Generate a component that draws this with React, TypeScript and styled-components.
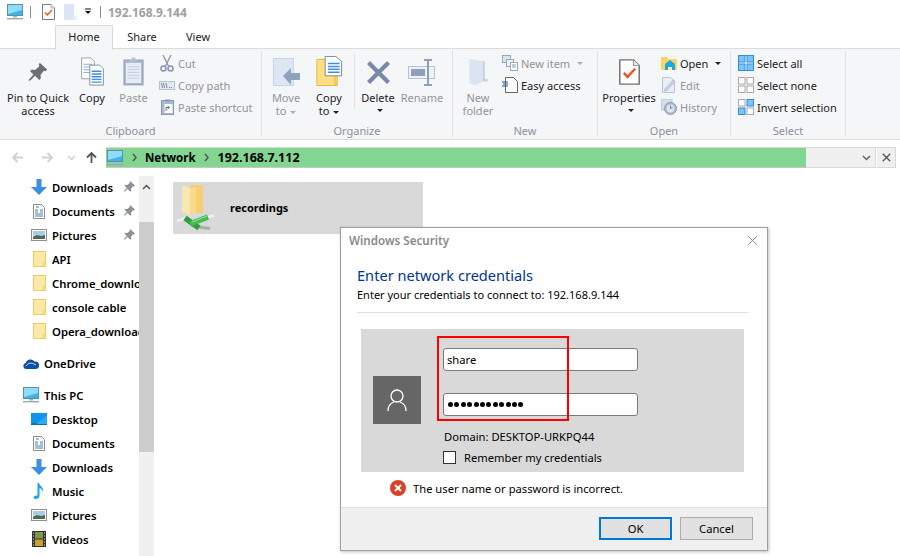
import React from "react";
import styled, { createGlobalStyle } from "styled-components";

const Global = createGlobalStyle`
  html, body { margin: 0; padding: 0; background: #fff; }
  body { font-family: "Noto Sans", "Open Sans", sans-serif; font-size: 11px; color: #1a1a1a; }
`;

const Page = styled.div`
  position: relative;
  width: 900px;
  height: 556px;
  overflow: hidden;
  background: #fff;
  display: flex;
  flex-direction: column;
`;

/* ---------- title bar ---------- */
const TitleBar = styled.div`
  height: 24px;
  display: flex;
  align-items: center;
  padding-left: 7px;
`;
const TitleSep = styled.span<{ $l: number; $r: number }>`
  width: 1px;
  height: 12px;
  background: #8a8a8a;
  margin-left: ${(p) => p.$l}px;
  margin-right: ${(p) => p.$r}px;
`;
const TitleText = styled.span`
  font-weight: 700;
  font-size: 12px;
  color: #a0a0a0;
`;
const QuickIcon = styled.span<{ $r: number }>`
  display: flex;
  margin-right: ${(p) => p.$r}px;
`;

/* ---------- tabs ---------- */
const Tabs = styled.div`
  height: 24px;
  display: flex;
  padding-left: 55px;
  box-sizing: border-box;
`;
const Tab = styled.div<{ $active?: boolean; $w: number }>`
  width: ${(p) => p.$w}px;
  height: ${(p) => (p.$active ? 25 : 24)}px;
  box-sizing: border-box;
  display: flex;
  align-items: center;
  justify-content: center;
  margin-top: 1px;
  padding-bottom: 3px;
  position: relative;
  z-index: 1;
  color: #222;
  background: ${(p) => (p.$active ? "#f5f6f7" : "transparent")};
  border: 1px solid ${(p) => (p.$active ? "#dadbdc" : "transparent")};
  border-bottom: none;
`;

/* ---------- ribbon ---------- */
const Ribbon = styled.div`
  height: 92px;
  box-sizing: border-box;
  background: #f5f6f7;
  border-top: 1px solid #dadbdc;
  border-bottom: 1px solid #dadbdc;
  display: flex;
  padding-top: 2px;
`;
const Group = styled.div<{ $w: number }>`
  width: ${(p) => p.$w}px;
  height: 86px;
  box-sizing: content-box;
  border-right: 1px solid #dfe1e3;
  display: flex;
  flex-direction: column;
`;
const GroupBody = styled.div<{ $pl?: number }>`
  flex: 1;
  display: flex;
  padding-left: ${(p) => p.$pl ?? 0}px;
`;
const GroupLabel = styled.div`
  height: 16px;
  line-height: 16px;
  margin-bottom: -2px;
  text-align: center;
  color: #8b9197;
`;
const Large = styled.div<{ $w: number; $off?: boolean }>`
  width: ${(p) => p.$w}px;
  display: flex;
  flex-direction: column;
  align-items: center;
  color: ${(p) => (p.$off ? "#8f959a" : "#222")};
  line-height: 13px;
  text-align: center;
  white-space: nowrap;
`;
const LargeLabel = styled.span`
  display: block;
`;
const LargeIcon = styled.div`
  height: 32px;
  margin-top: 3px;
  margin-bottom: 5px;
  display: flex;
  align-items: flex-end;
  justify-content: center;
`;
const Caret = styled.span<{ $off?: boolean }>`
  display: inline-block;
  width: 0;
  height: 0;
  margin-left: 4px;
  vertical-align: middle;
  border-left: 3px solid transparent;
  border-right: 3px solid transparent;
  border-top: 3px solid ${(p) => (p.$off ? "#a9adb1" : "#222")};
`;
const CaretLine = styled.div`
  height: 13px;
  display: flex;
  align-items: center;
  justify-content: center;
`;
const InnerSep = styled.div<{ $ml: number; $mr: number }>`
  width: 1px;
  height: 55px;
  margin: 3px ${(p) => p.$mr}px 0 ${(p) => p.$ml}px;
  background: #dfe1e3;
`;
const SmallCol = styled.div<{ $ml?: number }>`
  display: flex;
  flex-direction: column;
  margin-left: ${(p) => p.$ml ?? 0}px;
  padding-top: 1px;
`;
const Small = styled.div<{ $off?: boolean }>`
  height: 22px;
  display: flex;
  align-items: center;
  gap: 3px;
  white-space: nowrap;
  color: ${(p) => (p.$off ? "#8f959a" : "#222")};
`;
const SmallIcon = styled.span`
  width: 16px;
  height: 16px;
  display: flex;
  align-items: center;
  justify-content: center;
`;

/* ---------- address ---------- */
const AddressRow = styled.div`
  height: 21px;
  margin-top: 7px;
  display: flex;
  align-items: center;
`;
const NavButtons = styled.div`
  width: 106px;
  display: flex;
  align-items: center;
  padding-left: 11px;
  box-sizing: border-box;
`;
const NavBtn = styled.span<{ $w: number }>`
  width: ${(p) => p.$w}px;
  display: flex;
`;
const Crumbs = styled.div`
  width: 700px;
  height: 21px;
  box-sizing: border-box;
  background: #83d691;
  border-bottom: 1px solid #c4cbc5;
  border-top: 1px solid #d9d9d9;
  display: flex;
  align-items: center;
  font-weight: 700;
  color: #000;
  padding-left: 1px;
`;
const Crumb = styled.span<{ $ml: number; $size: number }>`
  margin-left: ${(p) => p.$ml}px;
  font-size: ${(p) => p.$size}px;
`;
const Chevron = styled.span<{ $ml: number }>`
  display: flex;
  margin-left: ${(p) => p.$ml}px;
`;
const AddressEnd = styled.div`
  width: 70px;
  height: 21px;
  box-sizing: border-box;
  background: #f0f0f0;
  border: 1px solid #d9d9d9;
  border-left: none;
  display: flex;
  align-items: center;
  justify-content: flex-end;
  padding-right: 4px;
`;
const CloseBtn = styled.div`
  width: 20px;
  height: 21px;
  box-sizing: border-box;
  background: #f0f0f0;
  border: 1px solid #d9d9d9;
  border-left: 1px solid #fff;
  display: flex;
  align-items: center;
  justify-content: center;
`;

/* ---------- body ---------- */
const Body = styled.div`
  flex: 1;
  margin-top: 8px;
  display: flex;
  min-height: 0;
`;
const NavPane = styled.div`
  width: 139px;
  margin-top: -1px;
  overflow: hidden;
  flex-shrink: 0;
  display: flex;
  flex-direction: column;
`;
const NavItem = styled.div<{ $root?: boolean; $gap?: number }>`
  height: 24px;
  flex-shrink: 0;
  display: flex;
  align-items: center;
  padding-left: ${(p) => (p.$root ? 23 : 31)}px;
  margin-top: ${(p) => p.$gap ?? 0}px;
  font-size: 11.3px;
  font-weight: 600;
  color: #000;
  white-space: nowrap;
  position: relative;
`;
const NavIcon = styled.span`
  width: 16px;
  height: 16px;
  display: flex;
  align-items: center;
  justify-content: center;
  margin-right: 5px;
  flex-shrink: 0;
`;
const Pin = styled.span`
  position: absolute;
  left: 124px;
  top: 6px;
  display: flex;
`;
const Scrollbar = styled.div`
  width: 15px;
  background: #f0f0f0;
  flex-shrink: 0;
  display: flex;
  flex-direction: column;
`;
const ScrollUp = styled.div`
  height: 46px;
  display: flex;
  justify-content: center;
  padding-top: 7px;
  box-sizing: border-box;
`;
const ScrollThumb = styled.div`
  height: 230px;
  background: #cdcdcd;
`;
const Content = styled.div`
  flex: 1;
  padding: 6px 0 0 19px;
`;
const FolderTile = styled.div`
  width: 250px;
  height: 52px;
  box-sizing: border-box;
  background: #d9d9d9;
  display: flex;
  align-items: center;
  font-weight: 700;
  color: #000;
`;
const TileName = styled.span`
  margin-bottom: 2px;
`;
const TileIcon = styled.span`
  width: 57px;
  display: flex;
`;

/* ---------- dialog ---------- */
const Dialog = styled.div`
  position: absolute;
  left: 340px;
  top: 227px;
  width: 428px;
  height: 324px;
  box-sizing: border-box;
  background: #fff;
  border: 1px solid #9f9f9f;
  box-shadow: 1px 1px 3px rgba(0, 0, 0, 0.25);
  display: flex;
  flex-direction: column;
  color: #000;
  font-size: 11.2px;
`;
const DialogTitle = styled.div`
  height: 26px;
  flex-shrink: 0;
  box-sizing: border-box;
  padding: 0 9px 2px 8px;
  display: flex;
  align-items: center;
  justify-content: space-between;
  color: #8a8a8a;
  font-size: 11.6px;
  font-weight: 600;
`;
const DialogMain = styled.div`
  flex: 1;
  padding: 10px 19px 0 16px;
  display: flex;
  flex-direction: column;
`;
const Heading = styled.div`
  font-size: 14.6px;
  line-height: 22px;
  color: #003399;
`;
const SubText = styled.div`
  line-height: 17px;
  padding-bottom: 9px;
  border-bottom: 1px solid #dfdfdf;
  font-size: 11px;
`;
const CredPanel = styled.div`
  margin: 16px 4px 0 4px;
  height: 143px;
  background: #d9d9d9;
  display: flex;
  padding: 19px 0 0 12px;
  box-sizing: border-box;
`;
const Avatar = styled.div`
  width: 48px;
  height: 48px;
  margin-top: 28px;
  background: #666;
  display: flex;
  align-items: center;
  justify-content: center;
`;
const Fields = styled.div`
  margin-left: 22px;
  display: flex;
  flex-direction: column;
`;
const Field = styled.div<{ $mt?: number }>`
  width: 195px;
  height: 23px;
  box-sizing: border-box;
  background: #fff;
  border: 1px solid #7a7a7a;
  border-radius: 3px;
  padding-left: 3px;
  display: flex;
  align-items: center;
  margin-top: ${(p) => p.$mt ?? 0}px;
`;
const Dots = styled.span`
  display: flex;
  gap: 1.4px;
  margin-left: 1px;
`;
const Dot = styled.i`
  width: 5px;
  height: 5px;
  border-radius: 50%;
  background: #000;
`;
const Domain = styled.div`
  margin: 13px 0 0 1px;
  line-height: 16px;
`;
const RememberRow = styled.div`
  margin-top: 5px;
  display: flex;
  align-items: center;
  gap: 8px;
`;
const Check = styled.span`
  width: 13px;
  height: 13px;
  box-sizing: border-box;
  background: #fff;
  border: 1px solid #333;
`;
const ErrorRow = styled.div`
  margin: 8px 0 0 33px;
  display: flex;
  align-items: center;
  gap: 7px;
`;
const Footer = styled.div`
  height: 43px;
  flex-shrink: 0;
  box-sizing: border-box;
  background: #f0f0f0;
  border-top: 1px solid #dfdfdf;
  display: flex;
  justify-content: flex-end;
  align-items: flex-start;
  gap: 8px;
  padding: 9px 14px 0 0;
`;
const Btn = styled.div<{ $primary?: boolean }>`
  width: 73px;
  height: 23px;
  box-sizing: border-box;
  background: #e1e1e1;
  border: ${(p) => (p.$primary ? "2px solid #0078d7" : "1px solid #adadad")};
  display: flex;
  align-items: center;
  justify-content: center;
`;
const RedBox = styled.div`
  position: absolute;
  left: 437px;
  top: 336px;
  width: 132px;
  height: 85px;
  box-sizing: border-box;
  border: 2px solid #f00;
  pointer-events: none;
`;

/* ---------- icons ---------- */
const PcIcon = ({ s = 16 }: { s?: number }) => (
  <svg width={s} height={s} viewBox="0 0 16 16">
    <rect x="0.5" y="0.5" width="15" height="11" fill="#3fb3ee" stroke="#5b8fa8" />
    <path d="M1 1h14v5L1 10z" fill="#8fdcf8" />
    <rect x="6" y="12" width="4" height="1.5" fill="#a9b4ba" />
    <rect x="0" y="14" width="16" height="1.4" fill="#9aa7ae" />
  </svg>
);
const PropsIcon = ({ w = 13, h = 16 }: { w?: number; h?: number }) => (
  <svg width={w} height={h} viewBox="0 0 13 16">
    <path d="M.5.5h8.5l3.5 3.5v11.5h-12z" fill="#fff" stroke="#6f6f6f" strokeWidth="0.9" />
    <path d="M9 .5v3.5h3.5" fill="#eee" stroke="#9a9a9a" strokeWidth="0.7" />
    <path d="M3 8.5l2.3 2.5 4.7-5" fill="none" stroke="#f0561e" strokeWidth="1.5" />
  </svg>
);
const PageIcon = () => (
  <svg width="13" height="16" viewBox="0 0 13 16">
    <path d="M0 0h10v12h3v4h-13z" fill="#dbe5f3" />
    <path d="M10 12h3v4h-3z" fill="#eef2f8" />
  </svg>
);
const DropMark = () => (
  <svg width="8" height="8" viewBox="0 0 8 8">
    <rect x="1" y="0.5" width="6" height="1" fill="#111" />
    <path d="M1 3h6l-3 3z" fill="#111" />
  </svg>
);
const PinBig = () => (
  <svg width="20" height="24" viewBox="0 0 24 28.8">
    <path d="M14 1l9 8-2 2-2-.5-4 5 .5 4-2 2-5-5-6 6-2-.5 6-7-4-4 2-2 4 .5 5-4.5-.5-2z" fill="#6a7076" />
  </svg>
);
const CopyBig = () => (
  <svg width="25" height="29" viewBox="0 0 26 32">
    <path d="M1 1h10l4 4v19H1z" fill="#fff" stroke="#8f9aa5" />
    <path d="M3 8h10M3 11h10M3 14h10M3 17h10" stroke="#7aa7dd" />
    <path d="M10 9h11l4 4v18H10z" fill="#fff" stroke="#7b8894" />
    <path d="M12 15h11v1.5H12zM12 18h11v1.5H12zM12 21h11v1.5H12zM12 24h11v1.5H12zM12 27h11v1.5H12z" fill="#3f8fe8" />
  </svg>
);
const PasteBig = () => (
  <svg width="21" height="29" viewBox="0 0 22 30">
    <rect x="1" y="3" width="20" height="26" fill="#aab8cd" stroke="#8c9ab0" />
    <rect x="3" y="6" width="16" height="21" fill="#e7ecf4" />
    <path d="M5 10h12M5 13h12M5 16h12M5 19h12M5 22h12" stroke="#c3cedd" />
    <path d="M7 3h8v3H7zM9 .5h4V3H9z" fill="#b0bccf" />
  </svg>
);
const CutIcon = () => (
  <svg width="14" height="17" viewBox="0 0 14 17">
    <path d="M3 0l5.5 11M11 0L5.5 11" stroke="#8f9db1" strokeWidth="1.4" />
    <circle cx="3.5" cy="13.5" r="2.5" fill="none" stroke="#7f96b8" strokeWidth="1.5" />
    <circle cx="10.5" cy="13.5" r="2.5" fill="none" stroke="#7f96b8" strokeWidth="1.5" />
  </svg>
);
const CopyPathIcon = () => (
  <svg width="16" height="9" viewBox="0 0 16 9">
    <rect x="0.5" y="0.5" width="15" height="8" fill="#e4e9f1" stroke="#b7c2d2" />
    <path d="M2.5 2l1 5M4.5 2l1 5M7 2l1 5" stroke="#7c8ca3" />
    <path d="M10 6.5h1M12 6.5h1" stroke="#7c8ca3" />
  </svg>
);
const PasteShortcutIcon = () => (
  <svg width="13" height="16" viewBox="0 0 13 16">
    <rect x="0.5" y="1.5" width="12" height="14" fill="#a9b8ce" stroke="#8b9ab0" />
    <rect x="3.5" y="5" width="8" height="9" fill="#fff" />
    <path d="M4 .5h5v2H4z" fill="#8b9ab0" />
    <path d="M5 12V8.5h3M6.5 7l2 1.5-2 1.5" stroke="#5f7187" fill="none" />
  </svg>
);
const MoveBig = () => (
  <svg width="27" height="28" viewBox="0 0 27 28">
    <path d="M.5.5h20v27H.5z" fill="#dde6f3" stroke="#cbd6e6" />
    <path d="M10 18l8-8v5h9v7h-9v5z" fill="#8fa3bf" />
  </svg>
);
const CopyToBig = () => (
  <svg width="27" height="30" viewBox="0 0 27 31">
    <path d="M.5 3.5h21v27H.5z" fill="#ffdf86" stroke="#e4b83c" />
    <path d="M18 20h3v10h-3z" fill="#f2cb5c" />
    <path d="M9 .5h11l6 5v15H9z" fill="#fff" stroke="#7b8894" />
    <path d="M12 7h12v1.5H12zM12 10h12v1.5H12zM12 13h12v1.5H12zM12 16h12v1.5H12z" fill="#3f8fe8" />
  </svg>
);
const DeleteBig = () => (
  <svg width="27" height="27" viewBox="0 0 27 27">
    <path d="M2 5l3-3 8.5 8.5L22 2l3 3-8.5 8.5L25 22l-3 3-8.5-8.5L5 25l-3-3 8.5-8.5z" fill="#7889a8" />
  </svg>
);
const RenameBig = () => (
  <svg width="28" height="27" viewBox="0 0 28 27">
    <rect x="0.5" y="7.5" width="26" height="12" fill="#eef2f8" stroke="#b5c2d5" />
    <rect x="3" y="10" width="14" height="7" fill="#8d9fbb" />
    <path d="M16 1h8M16 26h8M20 1v25" stroke="#8d9fbb" strokeWidth="2" />
  </svg>
);
const NewFolderBig = () => (
  <svg width="19" height="27" viewBox="0 0 19 28">
    <path d="M0 0l14 2v19h5v2H14l-8 4.5L0 25z" fill="#dbe4f1" />
    <path d="M14 2h2v19h3v2h-5z" fill="#c4d1e3" />
  </svg>
);
const NewItemIcon = () => (
  <svg width="16" height="16" viewBox="0 0 16 16">
    <rect x="0.5" y="0.5" width="8" height="7" fill="#dde4ee" stroke="#9ba9bb" />
    <rect x="4.5" y="4.5" width="7" height="7" fill="#eef2f7" stroke="#9ba9bb" />
    <rect x="8.5" y="7.5" width="7" height="8" fill="#fff" stroke="#9ba9bb" />
    <path d="M10 10h4M10 12h4" stroke="#7f9cc2" />
  </svg>
);
const EasyAccessIcon = () => (
  <svg width="16" height="16" viewBox="0 0 16 16">
    <path d="M3.5.5h8l4 4v11h-12z" fill="#fff" stroke="#666" />
    <path d="M0 5h6M1 7h5M0 9h6" stroke="#1d5fa8" />
  </svg>
);
const OpenIcon = () => (
  <svg width="16" height="14" viewBox="0 0 16 14">
    <path d="M0 1h6l1 2h9v11H0z" fill="#ffd35c" />
    <path d="M4 8l5-4 5 4v6H4z" fill="#18a9e8" />
    <path d="M7 11h4v3H7z" fill="#ffe9a8" />
  </svg>
);
const EditIcon = () => (
  <svg width="14" height="16" viewBox="0 0 14 16">
    <path d="M.5.5h8l4 3.5v11.5H.5z" fill="#e9eef6" stroke="#b9c5d6" />
    <path d="M3 12l8-9 2 1.5-8 9-2.5.5z" fill="#c5d2e4" stroke="#9fb0c7" strokeWidth="0.6" />
  </svg>
);
const HistoryIcon = () => (
  <svg width="16" height="16" viewBox="0 0 16 16">
    <rect x="0" y="0" width="11" height="11" fill="#d5deeb" stroke="#bac6d8" />
    <circle cx="9.5" cy="9.5" r="6" fill="#aab7c9" stroke="#8e9db2" />
    <circle cx="9.5" cy="9.5" r="4" fill="#dde4ee" />
    <path d="M9.5 6.5v3l2-1" stroke="#6f8099" fill="none" />
  </svg>
);
const Grid = ({ cells, border }: { cells: boolean[]; border?: boolean }) => (
  <svg width="16" height="16" viewBox="0 0 16 16">
    {[0, 1, 2, 3].map((i) => {
      const x = i % 2 === 0 ? 0 : 8.5;
      const y = i < 2 ? 0 : 8.5;
      const on = cells[i];
      return (
        <rect
          key={i}
          x={x + 0.5}
          y={y + 0.5}
          width="6.5"
          height="6.5"
          fill={on ? "#7cc4f4" : "#fff"}
          stroke={on ? "#2e8fdc" : "#a9a9a9"}
        />
      );
    })}
    {border && <rect x="0.5" y="0.5" width="15" height="15" fill="none" stroke="#2e8fdc" />}
  </svg>
);
const Arrow = ({ dir, c }: { dir: "l" | "r" | "u"; c: string }) => {
  const rot = dir === "l" ? 180 : dir === "u" ? -90 : 0;
  return (
    <svg width="13" height="13" viewBox="0 0 13 13" style={{ transform: `rotate(${rot}deg)` }}>
      <path d="M1 6.5h10M6.5 2l4.5 4.5L6.5 11" fill="none" stroke={c} strokeWidth="1.8" />
    </svg>
  );
};
const SmallChevron = ({ c, d = "d" }: { c: string; d?: "d" | "r" | "u" }) => (
  <svg width="9" height="9" viewBox="0 0 9 9">
    {d === "d" && <path d="M1 3l3.5 3.5L8 3" fill="none" stroke={c} strokeWidth="1.5" />}
    {d === "r" && <path d="M3 1l3 3.5L3 8" fill="none" stroke={c} strokeWidth="1.5" />}
    {d === "u" && <path d="M1 6l3.5-3.5L8 6" fill="none" stroke={c} strokeWidth="1.5" />}
  </svg>
);
const XMark = ({ c, s, w }: { c: string; s: number; w: number }) => (
  <svg width={s} height={s} viewBox="0 0 12 12">
    <path d="M1 1l10 10M11 1L1 11" stroke={c} strokeWidth={w} />
  </svg>
);
const DownloadIcon = () => (
  <svg width="16" height="16" viewBox="0 0 16 16">
    <path d="M5.5 0h5v8H16l-8 8-8-8h5.5z" fill="#3c8ee0" />
  </svg>
);
const DocIcon = () => (
  <svg width="12" height="15" viewBox="0 0 12 15">
    <path d="M.5.5h8l3 3v11h-11z" fill="#fff" stroke="#8c8c8c" />
    <path d="M3 3h3M2 6h3M7 6h3M2 8h3M7 8h3M2 10h8M2 12h8" stroke="#4a7fa8" />
  </svg>
);
const PicIcon = () => (
  <svg width="16" height="12" viewBox="0 0 16 12">
    <rect x="0.5" y="0.5" width="15" height="11" fill="#fff" stroke="#8f8f8f" />
    <rect x="2" y="2" width="12" height="8" fill="#a8cde8" />
    <path d="M2 8l4-2 4 1 4-1v4H2z" fill="#4e6b50" />
  </svg>
);
const FolderSmall = () => (
  <svg width="13" height="16" viewBox="0 0 13 16">
    <rect x="0.5" y="0.5" width="12" height="15" fill="#ffe9a8" stroke="#eccb5a" />
    <path d="M10 11h2.5v4.5H10z" fill="#ffe08a" stroke="#eccb5a" strokeWidth="0.6" />
  </svg>
);
const PinSmall = () => (
  <svg width="11" height="11" viewBox="0 0 11 11">
    <path d="M6 0l5 4.5-1 1-1-.3-2 2.5.3 2-1 1L3.5 8 .8 10.8 0 10l2.8-3L.5 4.8l1-1 2 .3L6 1.5z" fill="#8a9097" />
  </svg>
);
const CloudIcon = () => (
  <svg width="16" height="11" viewBox="0 0 16 11">
    <path d="M3 11a3 3 0 0 1-.4-5.9A5 5 0 0 1 11.5 3.5 3.8 3.8 0 0 1 13 11z" fill="#0e4fa8" />
    <path d="M3 8c2-3 5-4 10-1" stroke="#fff" strokeWidth="0.8" fill="none" />
  </svg>
);
const DesktopIcon = () => (
  <svg width="16" height="12" viewBox="0 0 16 12">
    <rect x="0" y="0" width="16" height="12" fill="#0f95ec" />
    <path d="M0 11h16" stroke="#0a4f88" />
    <path d="M16 2L5 11h11z" fill="#2ea9f3" />
  </svg>
);
const MusicIcon = () => (
  <svg width="12" height="16" viewBox="0 0 12 16">
    <path d="M4.5 0h1.5c.5 3 5 4 4 9-.5-2-2-3.5-3.5-4v8c0 2-2 3-4 3S0 14.5 1 13.5s2.3-1.3 3.5-1z" fill="#16a3f0" />
  </svg>
);
const VideoIcon = () => (
  <svg width="14" height="16" viewBox="0 0 14 16">
    <rect width="14" height="16" fill="#333" />
    <rect x="3" y="1" width="8" height="6.5" fill="#7a9a4a" />
    <rect x="3" y="8.5" width="8" height="6.5" fill="#c9a227" />
    <path d="M1 2h1M1 5h1M1 8h1M1 11h1M1 14h1M12 2h1M12 5h1M12 8h1M12 11h1M12 14h1" stroke="#ddd" />
  </svg>
);
const ShareFolder = () => (
  <svg width="45" height="52" viewBox="0 0 45 52">
    <path d="M17 3h13v28H17z" fill="#f7cf72" />
    <path d="M9 3l8 3h6v6h-6v22l-8-5z" fill="#f9e7b0" />
    <path d="M17 6h6v25h-6z" fill="#fad98a" />
    <path d="M4 39l9-3" stroke="#eef0ef" strokeWidth="2.5" />
    <path d="M35 35l6-1.5" stroke="#eef0ef" strokeWidth="2.5" />
    <path d="M25 45l12 1.5" stroke="#aab0ae" strokeWidth="3" />
    <path d="M12 36l14 10" stroke="#2f9e3c" strokeWidth="5.5" />
    <path d="M17 42l18-7" stroke="#43bb4e" strokeWidth="5.5" />
    <path d="M19 40l15-6" stroke="#8be08f" strokeWidth="1.2" />
  </svg>
);
const UserIcon = () => (
  <svg width="20" height="24" viewBox="0 0 20 24">
    <circle cx="10" cy="8" r="6" fill="none" stroke="#fff" strokeWidth="1.3" />
    <path d="M1 23c0-5 3-8 6-9M19 23c0-5-3-8-6-9" fill="none" stroke="#fff" strokeWidth="1.3" />
  </svg>
);
const ErrorIcon = () => (
  <svg width="16" height="16" viewBox="0 0 16 16">
    <circle cx="8" cy="8" r="8" fill="#d9412b" />
    <path d="M5 5l6 6M11 5l-6 6" stroke="#fff" strokeWidth="2" />
  </svg>
);

const quick = [
  { icon: <DownloadIcon />, label: "Downloads", pin: true },
  { icon: <DocIcon />, label: "Documents", pin: true },
  { icon: <PicIcon />, label: "Pictures", pin: true },
  { icon: <FolderSmall />, label: "API" },
  { icon: <FolderSmall />, label: "Chrome_downloads" },
  { icon: <FolderSmall />, label: "console cable" },
  { icon: <FolderSmall />, label: "Opera_downloads" },
];
const pcItems = [
  { icon: <DesktopIcon />, label: "Desktop" },
  { icon: <DocIcon />, label: "Documents" },
  { icon: <DownloadIcon />, label: "Downloads" },
  { icon: <MusicIcon />, label: "Music" },
  { icon: <PicIcon />, label: "Pictures" },
  { icon: <VideoIcon />, label: "Videos" },
];

export default function App() {
  return (
    <Page>
      <Global />
      <TitleBar>
        <QuickIcon $r={0}><PcIcon /></QuickIcon>
        <TitleSep $l={7} $r={11} />
        <QuickIcon $r={9}><PropsIcon /></QuickIcon>
        <QuickIcon $r={7}><PageIcon /></QuickIcon>
        <QuickIcon $r={8}><DropMark /></QuickIcon>
        <TitleSep $l={0} $r={7} />
        <TitleText>192.168.9.144</TitleText>
      </TitleBar>
      <Tabs>
        <Tab $active $w={58}>Home</Tab>
        <Tab $w={58}>Share</Tab>
        <Tab $w={54}>View</Tab>
      </Tabs>
      <Ribbon>
        <Group $w={261}>
          <GroupBody>
            <Large $w={76}><LargeIcon><PinBig /></LargeIcon><LargeLabel>Pin to Quick<br />access</LargeLabel></Large>
            <Large $w={32}><LargeIcon><CopyBig /></LargeIcon><LargeLabel>Copy</LargeLabel></Large>
            <Large $off $w={51}><LargeIcon><PasteBig /></LargeIcon><LargeLabel>Paste</LargeLabel></Large>
            <SmallCol>
              <Small $off><SmallIcon><CutIcon /></SmallIcon>Cut</Small>
              <Small $off><SmallIcon><CopyPathIcon /></SmallIcon>Copy path</Small>
              <Small $off><SmallIcon><PasteShortcutIcon /></SmallIcon>Paste shortcut</Small>
            </SmallCol>
          </GroupBody>
          <GroupLabel>Clipboard</GroupLabel>
        </Group>
        <Group $w={190}>
          <GroupBody $pl={2}>
            <Large $off $w={44}><LargeIcon><MoveBig /></LargeIcon><LargeLabel>Move<br />to<Caret $off /></LargeLabel></Large>
            <Large $w={42}><LargeIcon><CopyToBig /></LargeIcon><LargeLabel>Copy<br />to<Caret /></LargeLabel></Large>
            <InnerSep $ml={4} $mr={3} />
            <Large $w={40}><LargeIcon><DeleteBig /></LargeIcon><LargeLabel>Delete</LargeLabel><CaretLine><Caret /></CaretLine></Large>
            <Large $off $w={48}><LargeIcon><RenameBig /></LargeIcon><LargeLabel>Rename</LargeLabel></Large>
          </GroupBody>
          <GroupLabel>Organize</GroupLabel>
        </Group>
        <Group $w={144}>
          <GroupBody $pl={3}>
            <Large $off $w={44}><LargeIcon><NewFolderBig /></LargeIcon><LargeLabel>New<br />folder</LargeLabel></Large>
            <SmallCol $ml={2}>
              <Small $off><SmallIcon><NewItemIcon /></SmallIcon>New item<Caret $off /></Small>
              <Small><SmallIcon><EasyAccessIcon /></SmallIcon>Easy access</Small>
            </SmallCol>
          </GroupBody>
          <GroupLabel>New</GroupLabel>
        </Group>
        <Group $w={132}>
          <GroupBody $pl={2}>
            <Large $w={58}><LargeIcon><PropsIcon w={21} h={28} /></LargeIcon><LargeLabel>Properties</LargeLabel><CaretLine><Caret /></CaretLine></Large>
            <SmallCol $ml={3}>
              <Small><SmallIcon><OpenIcon /></SmallIcon>Open<Caret /></Small>
              <Small $off><SmallIcon><EditIcon /></SmallIcon>Edit</Small>
              <Small $off><SmallIcon><HistoryIcon /></SmallIcon>History</Small>
            </SmallCol>
          </GroupBody>
          <GroupLabel>Open</GroupLabel>
        </Group>
        <Group $w={114}>
          <GroupBody $pl={7}>
            <SmallCol>
              <Small><SmallIcon><Grid cells={[true, true, true, true]} border /></SmallIcon>Select all</Small>
              <Small><SmallIcon><Grid cells={[false, false, false, false]} /></SmallIcon>Select none</Small>
              <Small><SmallIcon><Grid cells={[false, true, true, false]} /></SmallIcon>Invert selection</Small>
            </SmallCol>
          </GroupBody>
          <GroupLabel>Select</GroupLabel>
        </Group>
      </Ribbon>
      <AddressRow>
        <NavButtons>
          <NavBtn $w={30}><Arrow dir="l" c="#d0d0d0" /></NavBtn>
          <NavBtn $w={26}><Arrow dir="r" c="#d0d0d0" /></NavBtn>
          <NavBtn $w={18}><SmallChevron c="#d0d0d0" /></NavBtn>
          <NavBtn $w={15}><Arrow dir="u" c="#555" /></NavBtn>
        </NavButtons>
        <Crumbs>
          <PcIcon />
          <Chevron $ml={7}><SmallChevron c="#555" d="r" /></Chevron>
          <Crumb $ml={6} $size={11.5}>Network</Crumb>
          <Chevron $ml={6}><SmallChevron c="#555" d="r" /></Chevron>
          <Crumb $ml={7} $size={12.5}>192.168.7.112</Crumb>
        </Crumbs>
        <AddressEnd><SmallChevron c="#606060" /></AddressEnd>
        <CloseBtn><XMark c="#555" s={9} w={1.8} /></CloseBtn>
      </AddressRow>
      <Body>
        <NavPane>
          {quick.map((q) => (
            <NavItem key={q.label}>
              <NavIcon>{q.icon}</NavIcon>
              {q.label}
              {q.pin && <Pin><PinSmall /></Pin>}
            </NavItem>
          ))}
          <NavItem $root $gap={8}><NavIcon><CloudIcon /></NavIcon>OneDrive</NavItem>
          <NavItem $root $gap={8}><NavIcon><PcIcon /></NavIcon>This PC</NavItem>
          {pcItems.map((q) => (
            <NavItem key={q.label}><NavIcon>{q.icon}</NavIcon>{q.label}</NavItem>
          ))}
        </NavPane>
        <Scrollbar>
          <ScrollUp><SmallChevron c="#505050" d="u" /></ScrollUp>
          <ScrollThumb />
        </Scrollbar>
        <Content>
          <FolderTile>
            <TileIcon><ShareFolder /></TileIcon>
            <TileName>recordings</TileName>
          </FolderTile>
        </Content>
      </Body>
      <Dialog>
        <DialogTitle>Windows Security<XMark c="#8a8a8a" s={11} w={1} /></DialogTitle>
        <DialogMain>
          <Heading>Enter network credentials</Heading>
          <SubText>Enter your credentials to connect to: 192.168.9.144</SubText>
          <CredPanel>
            <Avatar><UserIcon /></Avatar>
            <Fields>
              <Field>share</Field>
              <Field $mt={22}>
                <Dots>{Array.from({ length: 12 }).map((_, i) => <Dot key={i} />)}</Dots>
              </Field>
              <Domain>Domain: DESKTOP-URKPQ44</Domain>
              <RememberRow><Check />Remember my credentials</RememberRow>
            </Fields>
          </CredPanel>
          <ErrorRow><ErrorIcon />The user name or password is incorrect.</ErrorRow>
        </DialogMain>
        <Footer>
          <Btn $primary>OK</Btn>
          <Btn>Cancel</Btn>
        </Footer>
      </Dialog>
      <RedBox />
    </Page>
  );
}
